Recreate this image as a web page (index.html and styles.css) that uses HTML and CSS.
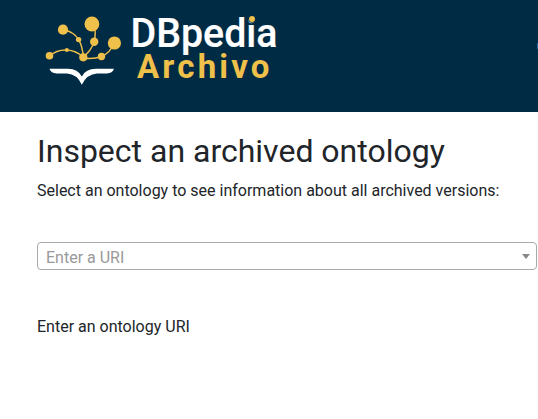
FILE: index.html
```
<!DOCTYPE html>
<html lang="en">
<head>
    <meta charset="UTF-8">
    <meta name="viewport" content="width=device-width, initial-scale=1.0">
    <title>DBpedia Archivo</title>
    <link rel="stylesheet" href="styles.css">
</head>
<body>
    <header class="navbar">
        <svg class="logo" width="240" height="90" viewBox="40 8 240 90" role="img" aria-label="DBpedia Archivo">
            <g class="logo-lines">
                <path d="M49.500 56 Q57 49.500 66.800 50 Q76 50.500 83.300 57"/>
                <path d="M63 29.700 Q74 31.500 78.600 39.600 Q82.500 46 83.300 57"/>
                <path d="M94.500 24 Q96 34 94.200 41.800 Q91 51 83.300 57"/>
                <path d="M114.400 43 Q110 53 101.500 56.500 Q93 59.500 83.300 58"/>
            </g>
            <g class="logo-dots">
                <circle cx="49.500" cy="55.800" r="3.800"/>
                <circle cx="66.800" cy="50" r="2"/>
                <circle cx="63" cy="29.700" r="5.100"/>
                <circle cx="78.600" cy="39.600" r="2.700"/>
                <circle cx="91.900" cy="24" r="7.400"/>
                <circle cx="94.200" cy="41.800" r="4.200"/>
                <circle cx="114.400" cy="43" r="6.600"/>
                <circle cx="101.500" cy="56.500" r="3.700"/>
                <circle cx="83.300" cy="57.300" r="4.100"/>
            </g>
            <path class="logo-book" d="M49.500 68.800 H68 Q78 69 81.800 76.500 Q85.500 69 96 68.800 H114 Q112.500 73.300 107 73.500 H97 Q87 74 81.800 84.800 Q77 74 67 73.500 H56.500 Q51 73.300 49.500 68.800 Z"/>
            <text class="logo-name" x="130.500" y="47" textLength="147" lengthAdjust="spacingAndGlyphs">DBpedia</text>
            <circle class="logo-tittle" cx="252" cy="19" r="3"/>
            <text class="logo-sub" x="137" y="77.700" textLength="132.500">Archivo</text>
        </svg>
        <span class="nav-edge"></span>
    </header>

    <main class="container">
        <h1>Inspect an archived ontology</h1>
        <p>Select an ontology to see information about all archived versions:</p>
        <div class="select" role="combobox" aria-expanded="false" tabindex="0">
            <span class="select-placeholder">Enter a URI</span>
            <span class="select-arrow"></span>
        </div>
        <p>Enter an ontology URI</p>
    </main>
</body>
</html>
```

FILE: styles.css
```
* { box-sizing: border-box; }
body { margin: 0; font-family: Roboto, sans-serif; font-size: 16px; line-height: 24px; color: #212529; background: #fff; }
.navbar { display: flex; justify-content: space-between; height: 112px; padding: 8px 0 0 40px; background: #002b45; }
.logo { display: block; overflow: visible; }
.logo-lines { fill: none; stroke: #efc04a; stroke-width: 1.4; }
.logo-dots, .logo-tittle { fill: #efc04a; }
.logo-tittle { stroke: #002b45; stroke-width: 1.5; paint-order: stroke; }
.logo-book { fill: #fff; }
.logo-name { fill: #fff; stroke: #fff; stroke-width: 0.2; font-size: 41px; font-weight: 500; }
.logo-sub { fill: #efc04a; font-size: 33px; font-weight: 700; }
.nav-edge { width: 1px; height: 6px; margin-top: 35px; background: #2369a0; }
.container { padding: 20px 1px 0 37px; }
h1 { margin: 0 0 9px; font-size: 32px; font-weight: 400; line-height: 38px; }
p { margin: 0; }
.select { display: flex; align-items: center; justify-content: space-between; height: 28px; margin: 39px 0 45px; padding: 2px 6px 0 8px; border: 1px solid #aaa; border-radius: 4px; }
.select-placeholder { padding-top: 2px; color: #999; }
.select-arrow { margin-bottom: 2px; border: 4px solid transparent; border-top: 5px solid #888; border-bottom: 0; }
```
